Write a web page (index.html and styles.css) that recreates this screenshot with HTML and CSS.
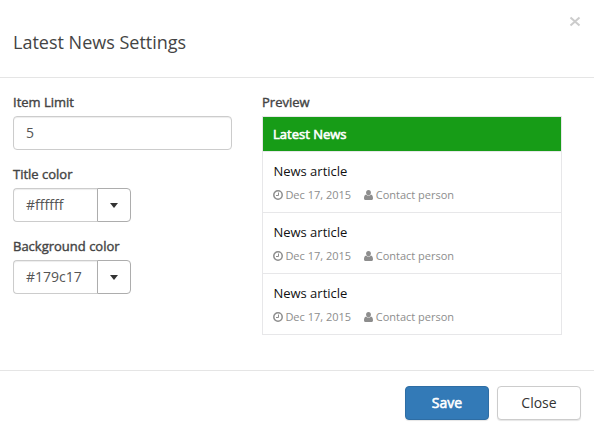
FILE: index.html
```html
<!DOCTYPE html>
<html lang="en">
<head>
<meta charset="utf-8">
<title>Latest News Settings</title>
<link rel="stylesheet" href="styles.css">
</head>
<body>
<svg class="sprite" aria-hidden="true">
  <symbol id="clock" viewBox="0 0 10 10"><circle cx="5" cy="5" r="4.2" fill="none" stroke="currentColor" stroke-width="1.5"/><path d="M5.5 2.500v3H3" fill="none" stroke="currentColor" stroke-width="1"/></symbol>
  <symbol id="user" viewBox="0 0 9 10"><ellipse cx="4.5" cy="2.6" rx="2.4" ry="2.6" fill="currentColor"/><path d="M2.1 4.4C0.6 4.7 0 6.2 0 8.2C0 9.3 0.6 10 1.5 10H7.5C8.4 10 9 9.3 9 8.2C9 6.2 8.4 4.7 6.900 4.400C5.700 6 3.300 6 2.100 4.400Z" fill="currentColor"/></symbol>
</svg>
<div class="modal">
  <header class="modal-header">
    <h1 class="modal-title">Latest News Settings</h1>
    <button class="dismiss" aria-label="Dismiss"><svg width="12" height="12" viewBox="0 0 12 12"><path d="M1.500 2.500l9 8M10.500 2.500l-9 8" stroke="currentColor" stroke-width="2"/></svg></button>
  </header>
  <main class="modal-body">
    <form class="fields">
      <div class="field">
        <label class="label">Item Limit</label>
        <div class="control">5</div>
      </div>
      <div class="field">
        <label class="label">Title color</label>
        <div class="picker"><div class="control">#ffffff</div><div class="toggle"><span class="caret"></span></div></div>
      </div>
      <div class="field">
        <label class="label">Background color</label>
        <div class="picker"><div class="control">#179c17</div><div class="toggle"><span class="caret"></span></div></div>
      </div>
    </form>
    <section class="preview">
      <div class="label">Preview</div>
      <div class="news">
        <div class="news-title">Latest News</div>
        <article class="item">
          <div class="item-name">News article</div>
          <div class="meta"><svg class="clock"><use href="#clock"/></svg><span class="date">Dec 17, 2015</span><svg class="user"><use href="#user"/></svg><span>Contact person</span></div>
        </article>
        <article class="item">
          <div class="item-name">News article</div>
          <div class="meta"><svg class="clock"><use href="#clock"/></svg><span class="date">Dec 17, 2015</span><svg class="user"><use href="#user"/></svg><span>Contact person</span></div>
        </article>
        <article class="item">
          <div class="item-name">News article</div>
          <div class="meta"><svg class="clock"><use href="#clock"/></svg><span class="date">Dec 17, 2015</span><svg class="user"><use href="#user"/></svg><span>Contact person</span></div>
        </article>
      </div>
    </section>
  </main>
  <footer class="modal-footer">
    <button class="button primary">Save</button>
    <button class="button">Close</button>
  </footer>
</div>
</body>
</html>
```
FILE: styles.css
```css
* { box-sizing: border-box; }
body {
  margin: 0;
  background: #fff;
  color: #333;
  font: 13px/20px "Open Sans", sans-serif;
}
.sprite { display: none; }
.modal { display: flex; flex-direction: column; height: 433px; }
.modal-header {
  display: flex;
  justify-content: space-between;
  align-items: flex-start;
  height: 78px;
  padding: 15px 13px 0;
  border-bottom: 1px solid #e5e5e5;
}
.modal-title { margin: 15px 0 0; font-size: 18px; font-weight: 400; line-height: 25px; color: #444; }
.dismiss { display: flex; padding: 0; border: 0; background: none; color: #ccc; }
.modal-body { display: flex; gap: 30px; height: 292px; padding: 14px 13px 0; }
.fields { width: 219px; }
.field { height: 72px; }
.label {
  display: block;
  margin-bottom: 4px;
  line-height: 20px;
  color: #444;
  -webkit-text-stroke: 0.4px currentColor;
}
.control {
  height: 34px;
  padding: 0 12px;
  border: 1px solid #ccc;
  border-radius: 4px;
  box-shadow: inset 0 1px 1px rgba(0, 0, 0, 0.075);
  font-size: 14px;
  line-height: 32px;
  color: #555;
}
.picker { display: flex; width: 118px; }
.picker .control { width: 84px; padding-right: 0; border-right: 0; border-radius: 4px 0 0 4px; }
.toggle {
  display: flex;
  align-items: center;
  justify-content: center;
  width: 34px;
  height: 34px;
  border: 1px solid #adadad;
  border-radius: 0 4px 4px 0;
}
.caret { border: 4.5px solid transparent; border-top: 5px solid #333; border-bottom: 0; }
.preview { width: 300px; }
.news { border: 1px solid #e7e7e9; }
.news-title {
  height: 34px;
  padding: 0 10px;
  background: #179c17;
  color: #fff;
  line-height: 35px;
  -webkit-text-stroke: 0.6px currentColor;
}
.item { height: 61px; padding: 9px 10px 0 10.4px; border-top: 1px solid #e7e7e9; }
.item-name { color: #111; }
.meta { display: flex; align-items: center; height: 20px; margin-top: 4px; font-size: 11px; color: #8d8d8d; }
.clock { width: 10px; height: 10px; margin-right: 2px; }
.user { width: 9px; height: 10px; margin-right: 3px; }
.date { margin-right: 12.600px; }
.modal-footer {
  display: flex;
  justify-content: flex-end;
  gap: 8px;
  height: 63px;
  padding: 15px 13px 0;
  border-top: 1px solid #e5e5e5;
}
.button {
  width: 84px;
  height: 34px;
  padding: 0;
  border: 1px solid #ccc;
  border-radius: 4px;
  background: #fff;
  box-shadow: 0 1px 1px rgba(0, 0, 0, 0.1);
  font: 14px/32px "Open Sans", sans-serif;
  color: #333;
}
.primary { border-color: #2e6da4; background: #337ab7; color: #fff; -webkit-text-stroke: 0.6px currentColor; }
```
